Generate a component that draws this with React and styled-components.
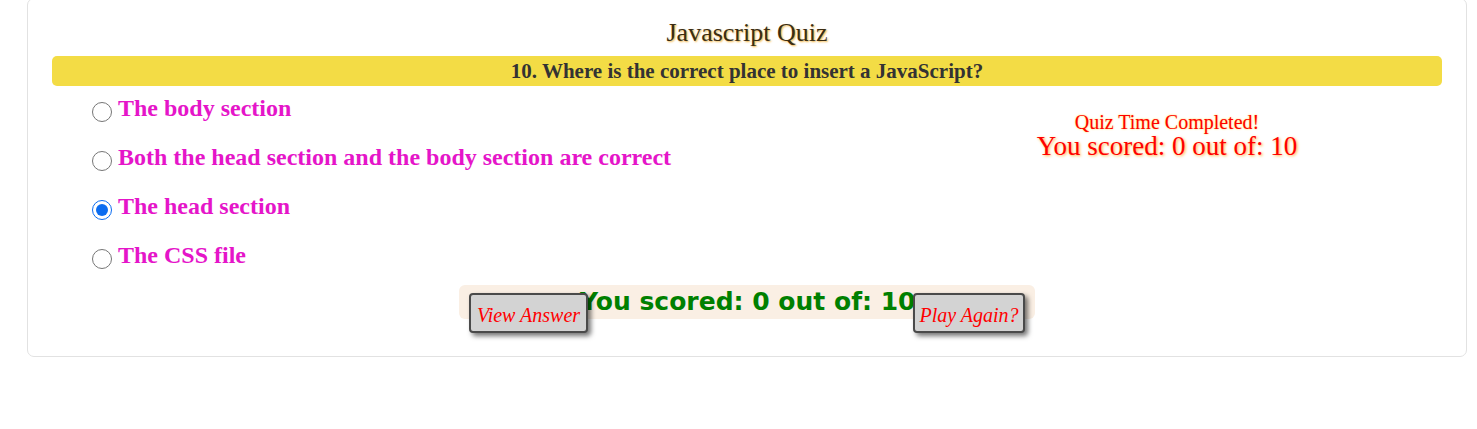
import styled, { createGlobalStyle } from "styled-components";

const GlobalStyle = createGlobalStyle`
  body {
    margin: 0;
    background: #ffffff;
    font-family: "Liberation Serif", serif;
  }
`;

const Page = styled.div`
  padding: 0 10px 0 27px;
`;

const Card = styled.div`
  width: 1440px;
  box-sizing: border-box;
  margin-top: -2px;
  padding: 19px 24px 37px;
  border: 1px solid #e2e2e2;
  border-radius: 7px;
  background: #fff;
`;

const Title = styled.h2`
  margin: 0;
  text-align: center;
  font-family: "Liberation Serif", serif;
  font-weight: 400;
  font-size: 26px;
  line-height: 30px;
  color: #3b2d12;
  text-shadow: 1px 1px 2px #f2b23c;
`;

const QuestionBar = styled.div`
  margin-top: 8px;
  height: 30px;
  border-radius: 5px;
  background: #f3dc45;
  display: flex;
  align-items: center;
  justify-content: center;
  font-family: "Liberation Serif", serif;
  font-weight: 700;
  font-size: 21px;
  color: #333;
`;

const Body = styled.div`
  display: grid;
  grid-template-columns: 1fr 420px;
  padding-right: 65px;
  margin-top: 8px;
`;

const OptionList = styled.div`
  display: flex;
  flex-direction: column;
  gap: 21px;
  padding-left: 40px;
`;

const Option = styled.label`
  display: flex;
  align-items: center;
  gap: 6px;
  height: 28px;
  font-family: "Liberation Serif", serif;
  font-weight: 700;
  font-size: 24px;
  color: #e515c9;
`;

const Radio = styled.input`
  margin: 8px 0 0 0;
  width: 20px;
  height: 20px;
  accent-color: #0b6cf0;
`;

const Result = styled.div`
  margin-top: 18px;
  text-align: center;
  color: #ff0000;
  font-family: "Liberation Serif", serif;
`;

const ResultNote = styled.div`
  font-size: 20px;
  line-height: 21px;
  text-shadow: 0 0 2px #ffd23a;
`;

const ResultScore = styled.div`
  font-size: 27px;
  line-height: 27px;
  text-shadow: 1px 1px 3px #ffb238;
`;

const Footer = styled.div`
  display: flex;
  justify-content: center;
  margin-top: 16px;
`;

const ScoreBox = styled.div`
  display: flex;
  align-items: flex-start;
  height: 34px;
  width: 576px;
  box-sizing: border-box;
  padding: 8px 10px 0;
  border-radius: 6px;
  background: #faefe4;
`;

const ScoreText = styled.div`
  flex: 1;
  min-width: 0;
  margin: -5px 0 0 -8px;
  font-family: "DejaVu Sans", sans-serif;
  font-weight: 700;
  font-size: 25px;
  line-height: 28px;
  color: #008000;
  white-space: nowrap;
`;

const ActionButton = styled.button`
  position: relative;
  z-index: 1;
  flex-shrink: 0;
  width: ${(p) => p.$w}px;
  height: 40px;
  box-sizing: border-box;
  padding: 4px 0 0;
  border: 2px solid #4a4a4a;
  border-radius: 4px;
  background: #d3d3d3;
  box-shadow: 3px 3px 5px rgba(0, 0, 0, 0.55);
  font-family: "Liberation Serif", serif;
  font-style: italic;
  font-size: 20px;
  color: #ff0000;
  cursor: pointer;
`;

const options = [
  { text: "The body section", checked: false },
  { text: "Both the head section and the body section are correct", checked: false },
  { text: "The head section", checked: true },
  { text: "The CSS file", checked: false },
];

const App = () => {
  return (
    <Page>
      <GlobalStyle />
      <Card>
        <Title>Javascript Quiz</Title>
        <QuestionBar>10. Where is the correct place to insert a JavaScript?</QuestionBar>
        <Body>
          <OptionList>
            {options.map((o) => (
              <Option key={o.text}>
                <Radio type="radio" name="answer" defaultChecked={o.checked} />
                {o.text}
              </Option>
            ))}
          </OptionList>
          <Result>
            <ResultNote>Quiz Time Completed!</ResultNote>
            <ResultScore>You scored: 0 out of: 10</ResultScore>
          </Result>
        </Body>
        <Footer>
          <ScoreBox>
            <ActionButton $w={119}>View Answer</ActionButton>
            <ScoreText>You scored: 0 out of: 10</ScoreText>
            <ActionButton $w={112}>Play Again?</ActionButton>
          </ScoreBox>
        </Footer>
      </Card>
    </Page>
  );
};

export default App;
